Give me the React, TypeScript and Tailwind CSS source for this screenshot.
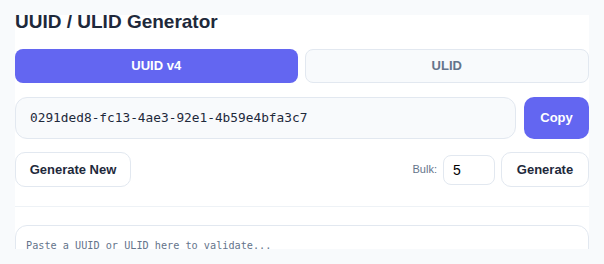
export default function App() {
  const sans = { fontFamily: '"Liberation Sans", Arial, sans-serif' };
  const mono = { fontFamily: '"DejaVu Sans Mono", "Liberation Mono", monospace' };
  return (
    <div className="h-[264px] w-[604px] bg-[#f8fafc] p-[15px] flex flex-col" style={sans}>
      <div className="flex-1 bg-white flex flex-col">
        {/* Title */}
        <h1 className="shrink-0 -mt-[3px] text-[19px] leading-[20px] font-bold text-[#1e293b]">
          UUID / ULID Generator
        </h1>

        {/* Tabs */}
        <div className="shrink-0 mt-[17px] flex gap-[7px]">
          <button className="flex-1 h-[34px] rounded-lg bg-[#6366f1] text-white text-[13px] font-bold">
            UUID v4
          </button>
          <button className="flex-1 h-[34px] rounded-lg bg-[#f8fafc] border border-[#e2e8f0] text-[#64748b] text-[13px] font-bold">
            ULID
          </button>
        </div>

        {/* Generated value */}
        <div className="shrink-0 mt-[14px] flex gap-[8px] h-[42px]">
          <div className="flex-1 flex items-center rounded-xl bg-[#f8fafc] border border-[#e2e8f0] px-[14px]">
            <span className="text-[12.8px] text-[#1e293b]" style={mono}>
              0291ded8-fc13-4ae3-92e1-4b59e4bfa3c7
            </span>
          </div>
          <button className="w-[65px] rounded-[10px] bg-[#6366f1] text-white text-[13px] font-bold">
            Copy
          </button>
        </div>

        {/* Actions */}
        <div className="shrink-0 mt-[13px] flex items-center h-[35px]">
          <button className="h-[35px] w-[116px] rounded-[10px] border border-[#e2e8f0] bg-white text-[13px] font-bold text-[#1e293b]">
            Generate New
          </button>
          <div className="ml-auto flex items-center">
            <span className="text-[11px] text-[#64748b]">Bulk:</span>
            <input
              defaultValue="5"
              className="ml-[6px] w-[52px] h-[30px] rounded-lg border border-[#e2e8f0] px-[9px] text-[14px] text-black outline-none"
              style={sans}
            />
            <button className="ml-[6px] h-[35px] w-[88px] rounded-[10px] border border-[#e2e8f0] bg-white text-[13px] font-bold text-[#1e293b]">
              Generate
            </button>
          </div>
        </div>

        {/* Divider */}
        <div className="shrink-0 mt-[19px] h-px bg-[#eef2f6]" />

        {/* Validator (cut off by the viewport) */}
        <div className="mt-[18px] h-[24px] overflow-hidden">
          <textarea
            className="block w-full h-[80px] rounded-xl border border-[#e2e8f0] bg-white px-[10px] pt-[12px] text-[10.2px] leading-[16px] text-[#1e293b] placeholder:text-[#64748b] outline-none resize-none"
            style={mono}
            placeholder="Paste a UUID or ULID here to validate..."
          />
        </div>
      </div>
    </div>
  );
}
